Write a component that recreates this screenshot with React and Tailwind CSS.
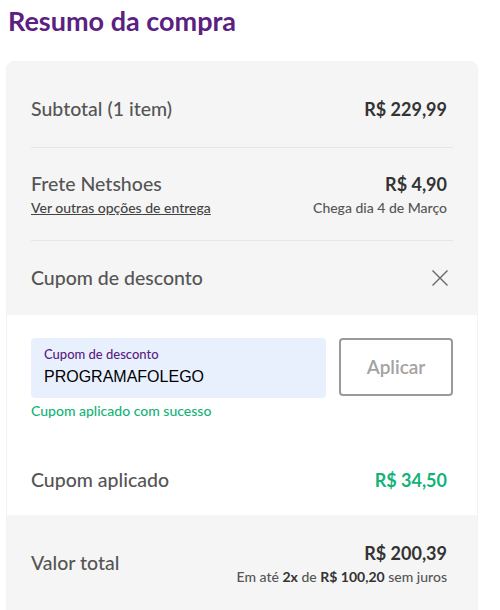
export default function App() {
  return (
    <div className="min-h-screen bg-white font-['Lato',sans-serif] text-[#555]">
      <h1 className="px-2 pt-[5px] text-[27px] font-bold leading-[32px] text-[#5a2181]">
        Resumo da compra
      </h1>

      <div className="ml-[6px] mt-[24px] w-[472px] overflow-hidden rounded-t-lg border border-[#f3f3f3] bg-[#f5f5f5]">
        <div className="px-6">
          <div className="flex items-center justify-between border-b border-[#e5e5e5] pb-[28px] pt-[37px]">
            <span className="text-[19.5px] font-medium leading-5">Subtotal (1 item)</span>
            <span className="pr-[6px] text-[18px] font-bold leading-5 text-[#333]">R$ 229,99</span>
          </div>

          <div className="flex justify-between border-b border-[#e5e5e5] pb-6 pt-6">
            <div>
              <div className="text-[19.5px] font-medium leading-6">Frete Netshoes</div>
              <a href="#" className="mt-[4px] block text-[14px] font-medium leading-4 text-[#444] underline">
                Ver outras opções de entrega
              </a>
            </div>
            <div className="pr-[6px] text-right">
              <div className="text-[18px] font-bold leading-6 text-[#333]">R$ 4,90</div>
              <div className="mt-[4px] text-[14px] font-medium leading-4 text-[#555]">Chega dia 4 de Março</div>
            </div>
          </div>

          <div className="flex items-center justify-between pb-[27px] pt-[27px]">
            <span className="text-[19.5px] font-medium leading-5">Cupom de desconto</span>
            <svg width="20" height="20" viewBox="0 0 20 20" className="mr-[3px] text-[#666]">
              <path d="M2.5 2.5 L17.5 17.5 M17.5 2.5 L2.5 17.5" stroke="currentColor" strokeWidth="1.4" fill="none" />
            </svg>
          </div>
        </div>

        <div className="bg-white px-6 pb-0 pt-[23px]">
          <div className="flex gap-[13px]">
            <div className="h-[60px] w-[295px] rounded-[4px] bg-[#e8f0fe] px-[13px] pt-[8px]">
              <div className="text-[13px] font-medium leading-4 text-[#5a2181]">Cupom de desconto</div>
              <div className="mt-[5px] font-['Liberation_Sans',sans-serif] text-[16px] leading-5 text-black">
                PROGRAMAFOLEGO
              </div>
            </div>
            <button className="h-[58px] w-[114px] rounded-[4px] border-2 border-[#9a9a9a] bg-white text-[19px] font-semibold text-[#a3a3a3]">
              Aplicar
            </button>
          </div>
          <div className="mt-[5px] text-[14px] font-medium leading-4 text-[#13b377]">Cupom aplicado com sucesso</div>

          <div className="flex items-center justify-between pb-[25px] pt-[51px]">
            <span className="text-[19.5px] font-medium leading-5">Cupom aplicado</span>
            <span className="pr-[6px] text-[18px] font-bold leading-5 text-[#13b377]">R$ 34,50</span>
          </div>
        </div>

        <div className="flex items-center justify-between px-6 pb-[40px] pt-[26px]">
          <span className="text-[19.5px] font-medium leading-5">Valor total</span>
          <div className="pr-[6px] text-right">
            <div className="text-[18px] font-bold leading-6 text-[#333]">R$ 200,39</div>
            <div className="mt-[4px] text-[14px] font-medium leading-4 text-[#555]">
              Em até <b className="text-[#333]">2x</b> de <b className="text-[#333]">R$ 100,20</b> sem juros
            </div>
          </div>
        </div>
      </div>
    </div>
  );
}
